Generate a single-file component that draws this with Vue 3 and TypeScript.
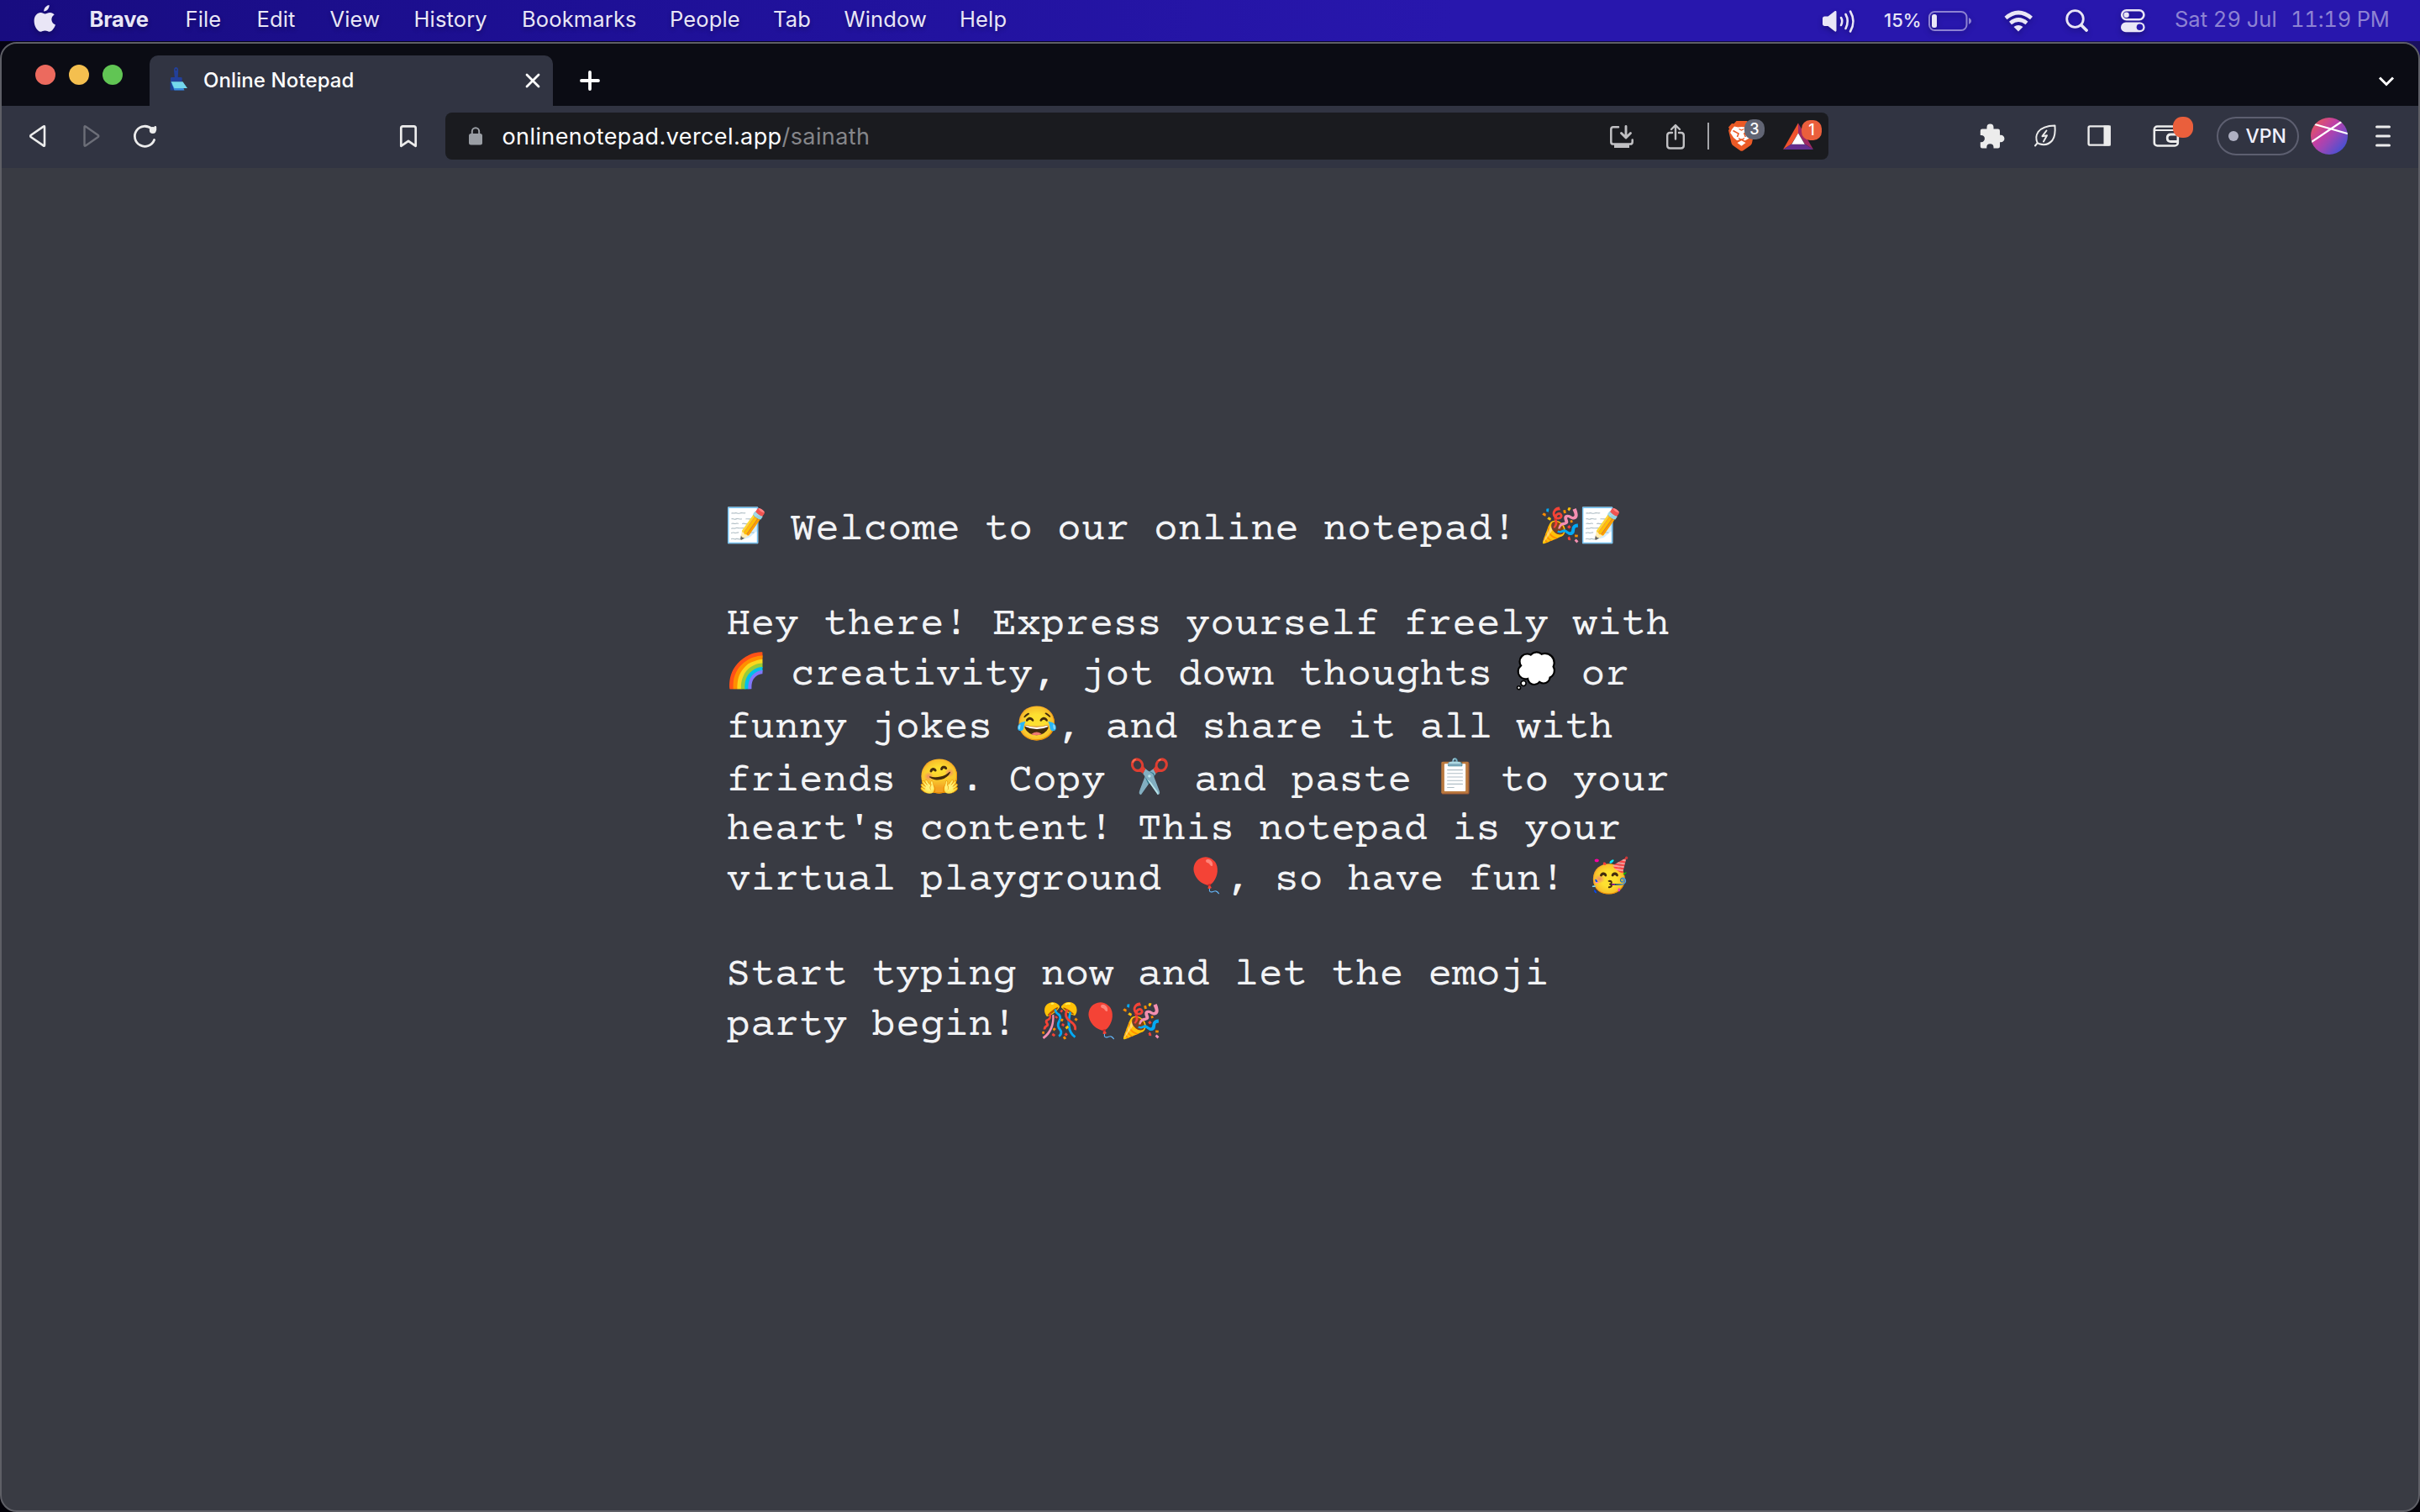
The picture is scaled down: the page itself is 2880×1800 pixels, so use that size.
<script setup lang="ts">
interface MenuItem { label: string; width: number }

const menus: MenuItem[] = [
  { label: 'File', width: 85 },
  { label: 'Edit', width: 87 },
  { label: 'View', width: 100 },
  { label: 'History', width: 128.5 },
  { label: 'Bookmarks', width: 176 },
  { label: 'People', width: 123 },
  { label: 'Tab', width: 84.5 },
  { label: 'Window', width: 137.5 },
  { label: 'Help', width: 60 },
]

interface Piece { text: string; emoji: boolean }

// Splits a line into plain runs and single emoji so each emoji gets a fixed advance.
function split(line: string): Piece[] {
  return line
    .split(/(\p{Extended_Pictographic}\uFE0F?)/u)
    .filter((s) => s.length > 0)
    .map((text) => ({ text, emoji: /\p{Extended_Pictographic}/u.test(text) }))
}

const lines: { height: number; pieces: Piece[] }[] = [
  { height: 113, text: '📝 Welcome to our online notepad! 🎉📝' },
  { height: 60, text: 'Hey there! Express yourself freely with' },
  { height: 63, text: '🌈 creativity, jot down thoughts 💭 or' },
  { height: 63, text: 'funny jokes 😂, and share it all with' },
  { height: 58, text: 'friends 🤗. Copy ✂️ and paste 📋 to your' },
  { height: 60, text: "heart's content! This notepad is your" },
  { height: 113, text: 'virtual playground 🎈, so have fun! 🥳' },
  { height: 60, text: 'Start typing now and let the emoji' },
  { height: 60, text: 'party begin! 🎊🎈🎉' },
].map((l) => ({ height: l.height, pieces: split(l.text) }))
</script>

<template>
  <div class="desktop">
    <header class="menubar">
      <svg class="apple" width="27" height="34" viewBox="0 0 27 34" fill="#e9e6f6">
        <path d="M18.6 0c.3 3.900-3 7.600-6.400 7.500C11.800 4 15.300.4 18.600 0z" />
        <path d="M24.700 11.400c-5 3.100-4.200 9.800 1.300 12-1.300 3.900-4.300 8.300-7.200 8.300-2 0-2.800-1.200-5.200-1.200s-3.400 1.200-5.300 1.200C4.600 31.700.6 25.300.6 19c0-6.200 3.900-9.900 7.800-9.900 2.300 0 3.900 1.400 5.300 1.400 1.300 0 3.300-1.500 6-1.500 1.900 0 3.800.9 5 2.400z" />
      </svg>
      <span class="app-name">Brave</span>
      <nav class="menus">
        <span v-for="m in menus" :key="m.label" :style="{ width: m.width + 'px' }">{{ m.label }}</span>
      </nav>
      <svg class="volume" width="44" height="32" viewBox="2167 8 44 32" fill="none" stroke="#e9e6f6" stroke-width="2.600" stroke-linecap="round">
        <path d="M2169 21c0-1.500 1-2.500 2.500-2.500h4l8-6.200c1-.8 2-.3 2 1v22c0 1.300-1 1.800-2 1l-8-6.300h-4c-1.500 0-2.500-1-2.500-2.500z" fill="#e9e6f6" stroke="none" />
        <path d="M2191 20q2.500 4 0 9M2196.500 16q4.500 8 0 17M2202 12.500q7 12 0 24" />
      </svg>
      <span class="percent">15%</span>
      <svg class="battery" width="54" height="28" viewBox="2294 10 54 28">
        <rect x="2296" y="13" width="44.500" height="22" rx="6.500" fill="none" stroke="#8d82d2" stroke-width="2" />
        <rect x="2299" y="16" width="6" height="16" rx="2.500" fill="#e9e6f6" />
        <path d="M2343 20q3.200 1.500 3.200 4t-3.200 4z" fill="#8d82d2" />
      </svg>
      <svg class="wifi" width="36" height="30" viewBox="2384 9 36 30" fill="none" stroke="#e9e6f6" stroke-width="4.600">
        <path d="M2387 20.500q15-13 30.500 0M2392.500 26.500q9.700-8 19.500 0" />
        <path d="M2396.500 31q5.500-4 11 0l-5.500 5.500z" fill="#e9e6f6" stroke="none" />
      </svg>
      <svg class="search" width="30" height="30" viewBox="2457 10 30 30" fill="none" stroke="#e9e6f6" stroke-linecap="round">
        <circle cx="2469.500" cy="22.500" r="9.800" stroke-width="2.800" />
        <path d="M2477 30l6 6" stroke-width="3.800" />
      </svg>
      <svg class="control" width="32" height="30" viewBox="2522 9 32 30">
        <rect x="2525.200" y="11.200" width="26.200" height="11" rx="5.500" fill="none" stroke="#e9e6f6" stroke-width="2.600" />
        <circle cx="2530.600" cy="16.700" r="3.200" fill="#e9e6f6" />
        <rect x="2524" y="25.500" width="28.600" height="11.800" rx="5.900" fill="#e9e6f6" />
        <circle cx="2546.500" cy="31.300" r="3.800" fill="#2817ad" />
      </svg>
      <span class="date">Sat 29 Jul</span>
      <span class="clock">11:19 PM</span>
    </header>

    <main class="window">
      <div class="tabstrip">
        <div class="lights"><i class="red" /><i class="yellow" /><i class="green" /></div>
        <div class="tab">
          <svg class="favicon" width="22" height="32" viewBox="0 0 22 32">
            <path d="M7.400 1q2.800 0 2.800 4l-.5 8h3.800q1.200 0 1.200 1.200V18H1v-3.800Q1 13 2.200 13h3.600L5 5q0-4 2.400-4z" fill="#23409a" />
            <circle cx="7.500" cy="4" r=".9" fill="#313442" />
            <path d="M.6 18.500h10l6 10H.6z" fill="#1d3f91" />
            <path d="M2.500 21l3 7.500h12L14 20z" fill="#3b8bdc" />
            <path d="M1.500 18.300h14l5.500 7.800H5.500z" fill="#74d7ec" />
          </svg>
          <span class="tab-title">Online Notepad</span>
          <svg class="close" width="20" height="20" viewBox="0 0 20 20" stroke="#fff" stroke-width="2.800" stroke-linecap="round">
            <path d="M3 3l14 14M17 3L3 17" />
          </svg>
        </div>
        <svg class="plus" width="28" height="28" viewBox="0 0 28 28" stroke="#fff" stroke-width="3.800" stroke-linecap="round">
          <path d="M14 4v20M4 14h20" />
        </svg>
        <svg class="chevron" width="24" height="16" viewBox="0 0 24 16" fill="none" stroke="#fff" stroke-width="3">
          <path d="M4 3.500l8 8 8-8" />
        </svg>
      </div>

      <div class="toolbar">
        <svg class="back" width="24" height="32" viewBox="33 146 24 32" fill="none" stroke="#ececec" stroke-width="2.600" stroke-linejoin="round">
          <path d="M53 151.200v21.600q0 1.600-1.300.6L37 163.300q-1.600-1.300 0-2.600l14.700-10.100q1.300-1 1.300.6z" />
        </svg>
        <svg class="forward" width="24" height="32" viewBox="97 146 24 32" fill="none" stroke="#6c6e78" stroke-width="2.400" stroke-linejoin="round">
          <path d="M100.500 151.200v21.600q0 1.600 1.300.6l14.700-10.100q1.600-1.300 0-2.600l-14.700-10.100q-1.300-1-1.300.6z" />
        </svg>
        <svg class="reload" width="32" height="32" viewBox="156 146 32 32" fill="none" stroke="#ececec" stroke-width="2.800" stroke-linecap="round">
          <path d="M183.600 166.500A12 12 0 1 1 180.600 153.500" />
          <circle cx="181.800" cy="155" r="4" fill="#ececec" stroke="none" />
          <path d="M184.800 151.500v3" />
        </svg>
        <svg class="bookmark" width="26" height="32" viewBox="473 146 26 32" fill="none" stroke="#ececec" stroke-width="2.700" stroke-linejoin="round">
          <path d="M479.500 150.400h13q2.200 0 2.200 2.200v21.200l-8.700-6-8.700 6v-21.200q0-2.200 2.200-2.200z" />
        </svg>
        <div class="omnibox">
          <svg class="lock" width="18" height="24" viewBox="0 0 18 24">
            <path d="M4.800 10V6.500a4.200 4.200 0 0 1 8.400 0V10" fill="none" stroke="#9a9ea4" stroke-width="2" />
            <rect x="1" y="9" width="16" height="13.500" rx="2.500" fill="#9a9ea4" />
          </svg>
          <span class="url">onlinenotepad.vercel.app<em>/sainath</em></span>
          <svg class="install" width="32" height="32" viewBox="1914 146 32 32" fill="none" stroke="#c0c0c3" stroke-width="2.500" stroke-linecap="round" stroke-linejoin="round">
            <path d="M1926 151.200h-6q-2.700 0-2.700 2.700v15q0 2.700 2.700 2.700h20q2.700 0 2.700-2.700v-2.500" />
            <path d="M1935 150.500v13M1929.500 158.500l5.500 5.500 5.500-5.500" stroke-width="2.900" />
            <path d="M1921 172h18v4h-18z" fill="#c0c0c3" stroke="none" />
          </svg>
          <svg class="share" width="28" height="34" viewBox="1980 145 28 34" fill="none" stroke="#c0c0c3" stroke-width="2.400" stroke-linecap="round" stroke-linejoin="round">
            <path d="M1990 158h-2.500q-3.300 0-3.300 3.300v12q0 3.200 3.300 3.200h13q3.300 0 3.300-3.200v-12q0-3.300-3.300-3.300H1998" />
            <path d="M1994 165.500v-15M1989 154l5-5 5 5" />
          </svg>
          <i class="divider" />
          <div class="shield">
            <svg width="30" height="38" viewBox="2055 143 30 38">
              <path d="M2065.500 144h12.500l3 3.500 4.500-.3 1.500 8-3 15q-.5 2-2 3l-8.500 6q-1.800 1-3.600 0l-8.400-6q-1.500-1-2-3l-3.500-15 1-1.800-1-2 4-4.400 2.500.3z" fill="#eb5a26" />
              <path d="M2060 154l3-3.500 4.500 1 4-.6 4.200.6 5-1 3.500 3.500 1 4-4.500 6.500-5 3-4-2.200-5.500 2-4-3.200-4-6z" fill="#fff" />
              <path d="M2061.500 155.500l6.500 3.500-1.500 4M2081.500 155.500l-6.700 3.500 1.500 4" fill="none" stroke="#eb5a26" stroke-width="1.600" />
              <path d="M2068.500 153.500l3 1.500 3-1.500M2068 164.500l3.500 2 3.500-2" fill="none" stroke="#eb5a26" stroke-width="1.300" />
              <path d="M2066.500 170l5-2.800 5 2.800-5 3.800z" fill="#fff" />
            </svg>
            <b class="count grey">3</b>
          </div>
          <div class="rewards">
            <svg width="38" height="34" viewBox="2121 144 38 34">
              <path d="M2140 145.500l-18 31.500 10-6.500 8-13z" fill="#f0532d" />
              <path d="M2140 145.500l18 31.500-10-6.500-8-13z" fill="#9e2a63" />
              <path d="M2122 177h36l-10-6.500h-16z" fill="#63308f" />
              <path d="M2140 157.500l7.800 13.200h-15.600z" fill="#fff" />
            </svg>
            <b class="count orange">1</b>
          </div>
        </div>
        <svg class="puzzle" width="32" height="34" viewBox="2355 145 32 34" fill="#ececec">
          <path d="M2359 153.500h5.500v-2a4 4 0 0 1 8 0v2h5.300q2.200 0 2.200 2.200v5h1.200a4.200 4.200 0 0 1 0 8.500H2380v5q0 2.300-2.200 2.300h-5.300v-1.200a4.100 4.100 0 0 0-8.200 0v1.200h-5.300q-2.200 0-2.200-2.300v-5h1a4.100 4.100 0 0 0 0-8.300h-1v-5.200q0-2.200 2.200-2.200z" />
        </svg>
        <svg class="leaf" width="30" height="32" viewBox="2419 146 30 32" fill="none" stroke="#ececec" stroke-width="2" stroke-linecap="round" stroke-linejoin="round">
          <path d="M2422 173.500l2.800-3.300q-3.300-7 .7-13 5.500-7.500 20-7.700 1 12-3 17.500-6 7.300-15.500 4.300l-2.200-1.100" />
          <path d="M2435.500 155.500l-5 6.700 5.500-1-4 7.300" />
        </svg>
        <svg class="sidebar" width="32" height="30" viewBox="2482 148 32 30">
          <rect x="2485.600" y="151.400" width="25" height="22.200" rx="1.600" fill="none" stroke="#ececec" stroke-width="2.400" />
          <path d="M2503.500 150.500h8.300v24h-8.300z" fill="#ececec" />
        </svg>
        <div class="wallet">
          <svg width="34" height="30" viewBox="2561 148 34 30" fill="none" stroke="#ececec" stroke-width="2.600">
            <rect x="2563.800" y="151.500" width="28" height="23" rx="3.600" />
            <path d="M2564 156h28" stroke-width="2.200" />
            <path d="M2592 161h-8.500q-4.300 0-4.300 4.200t4.300 4.300h8.500" stroke-width="2.800" />
          </svg>
          <b class="dot" />
        </div>
        <div class="vpn"><i />VPN</div>
        <svg class="avatar" width="44" height="44" viewBox="0 0 44 44">
          <defs>
            <linearGradient id="face" x1="0" y1="0.100" x2="0.900" y2="0.900">
              <stop offset=".05" stop-color="#e6565c" />
              <stop offset=".42" stop-color="#bf3fa6" />
              <stop offset=".6" stop-color="#9c46b6" />
              <stop offset="1" stop-color="#3d52d6" />
            </linearGradient>
            <clipPath id="disc"><circle cx="22" cy="22" r="22" /></clipPath>
          </defs>
          <g clip-path="url(#disc)">
            <path d="M0 0h44v44H0z" fill="url(#face)" />
            <path d="M0 29.500L38 4M3 7.500L45 19.500" stroke="#fff" stroke-width="2.200" />
          </g>
        </svg>
        <svg class="burger" width="22" height="28" viewBox="0 0 22 28" stroke="#ececec" stroke-width="3" stroke-linecap="round">
          <path d="M3.500 3h15M3.500 14h15M3.500 25h15" />
        </svg>
      </div>

      <section class="note">
        <p v-for="(l, i) in lines" :key="i" :style="{ height: l.height + 'px' }"><template v-for="(p, j) in l.pieces" :key="j"><span :class="{ emoji: p.emoji }">{{ p.text }}</span></template></p>
      </section>
    </main>
  </div>
</template>

<style>
body { background: #000; }
</style>

<style scoped>
.desktop {
  width: 2880px;
  height: 1800px;
  box-sizing: border-box;
  overflow: hidden;
  display: flex;
  flex-direction: column;
  font-family: Inter, "Noto Sans", sans-serif;
  background: linear-gradient(90deg, #050312, #0a0426 50%, #1a1060) top / 100% 90px no-repeat #020108;
}
svg { display: block; flex: none; }
.menubar {
  height: 49px;
  display: flex;
  align-items: center;
  background: linear-gradient(90deg, #180c80 0, #1e1096 25%, #2817ad 60%, #2817ad 100%);
  color: #e9e6f6;
  font-size: 25.5px;
  letter-spacing: .15px;
  white-space: pre;
  line-height: 46px;
}
.menubar span { position: relative; top: -2px; flex: none; }
.menubar svg { filter: drop-shadow(0 3px 3px rgba(0, 0, 30, .3)); }
.apple { margin: -3px 0 0 39.500px; }
.app-name { width: 114px; margin-left: 40px; font-weight: 700; letter-spacing: -.2px; text-shadow: 0 3px 5px rgba(0, 0, 30, .3); }
.menus { display: flex; text-shadow: 0 3px 5px rgba(0, 0, 30, .3); }
.volume { margin-left: auto; }
.percent { width: 52px; margin-left: 31px; font-size: 22px; font-weight: 500; letter-spacing: 0; }
.menubar .percent { top: -1px; }
.wifi { margin-left: 36px; }
.search { margin-left: 37px; }
.control { margin-left: 35px; }
.date, .clock { color: #8e83d3; font-variant-numeric: tabular-nums; }
.date { width: 138px; margin-left: 34px; letter-spacing: 0; }
.clock { width: 154px; letter-spacing: -.2px; }

.window {
  flex: 1;
  margin-top: 1px;
  box-sizing: border-box;
  border: 2px solid #5e5f66;
  border-radius: 20px;
  overflow: hidden;
  display: flex;
  flex-direction: column;
  background: #393b43;
}
.tabstrip {
  height: 74px;
  display: flex;
  background: #0b0c14;
  flex: none;
}
.lights { display: flex; gap: 16px; margin: 25px 0 0 40px; width: 136px; }
.lights i { width: 24px; height: 24px; border-radius: 50%; }
.red { background: #ec6a5e; }
.yellow { background: #f4bf4f; }
.green { background: #61c554; }
.tab {
  width: 480px;
  height: 60px;
  margin-top: 14px;
  box-sizing: border-box;
  border-radius: 10px 10px 0 0;
  background: #313442;
  display: flex;
  align-items: center;
}
.favicon { margin: -3px 0 0 23.500px; }
.tab-title { margin-left: 18.500px; color: #fff; font-size: 24px; font-weight: 500; letter-spacing: .1px; line-height: 60px; }
.close { margin: 0 14.500px 0 auto; }
.plus { margin: 30px 0 0 29.500px; }
.chevron { margin: 37px 26.500px 0 auto; }

.toolbar {
  height: 74px;
  flex: none;
  display: flex;
  align-items: center;
  background: #313442;
}
.toolbar > svg, .toolbar > div { margin-top: -2px; }
.back { margin-left: 31px; }
.forward { margin-left: 40px; }
.reload { margin-left: 35px; }
.bookmark { margin-left: 285px; }
.omnibox {
  width: 1646px;
  height: 56px;
  margin-left: 31px;
  border-radius: 8px;
  background: #1a1b1f;
  display: flex;
  align-items: center;
}
.lock { margin-left: 26.500px; }
.url { margin-left: 23px; color: #fff; font-size: 27px; letter-spacing: .4px; line-height: 54px; padding-top: 2px; }
.url em { color: #85868a; font-style: normal; }
.install { margin-left: auto; }
.share { margin-left: 34px; }
.divider { width: 2px; height: 32px; margin-left: 24px; background: #a4a5a9; }
.shield, .rewards { position: relative; width: 38px; }
.shield { margin-left: 22px; margin-right: 27px; }
.rewards { margin-right: 17px; }
.count {
  position: absolute;
  top: -1px;
  left: 20px;
  width: 24px;
  height: 24px;
  border-radius: 10px;
  color: #fff;
  font: 500 18px/24px Inter, sans-serif;
  text-align: center;
}
.rewards .count { left: 23px; top: -2px; }
.grey { background: #616574; }
.orange { background: #ea5f3c; }
.puzzle { margin-left: 179px; }
.leaf { margin-left: 32px; }
.sidebar { margin-left: 33px; }
.wallet { position: relative; width: 34px; margin-left: 47px; }
.dot { position: absolute; left: 25px; top: -8px; width: 24px; height: 25px; border-radius: 11px; background: #ea5f3c; }
.vpn {
  width: 98px;
  height: 46px;
  margin-left: 43px;
  box-sizing: border-box;
  border: 2px solid #5d5f70;
  border-radius: 23px;
  display: flex;
  align-items: center;
  gap: 8.500px;
  padding-left: 12px;
  color: #f0f0ff;
  font-size: 23px;
  font-weight: 500;
}
.vpn i { width: 12px; height: 12px; border-radius: 50%; background: #aeb0c2; }
.avatar { margin-left: 14px; }
.burger { margin-left: 31px; }

.note {
  margin: 404px 0 0 862.500px;
  font-family: "Courier Prime", "Courier 10 Pitch", "Nimbus Mono PS", FreeMono, "Liberation Mono", monospace;
  font-size: 48px;
  line-height: 54px;
  color: #f2f3f5;
}
.note p { margin: 0; display: flex; align-items: baseline; white-space: pre; }
.note span { line-height: 54px; }
.note .emoji {
  position: relative;
  top: -3px;
  left: -1px;
  width: 48px;
  font-family: "Noto Color Emoji", sans-serif;
  font-size: 40px;
  line-height: 20px;
}
</style>
